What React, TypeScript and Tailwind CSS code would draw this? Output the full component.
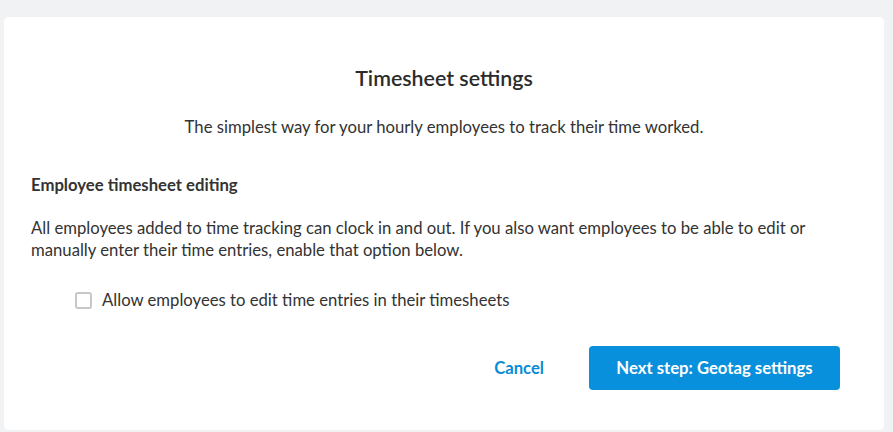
export default function App() {
  return (
    <div
      className="w-[893px] h-[432px] bg-[#f1f2f4] pt-[17px] pl-[4px] overflow-hidden"
      style={{ fontFamily: 'Lato, "Noto Sans", sans-serif' }}
    >
      <div className="w-[880px] h-[413px] bg-white rounded-[5px] flex flex-col text-[#333333] text-[16.7px] leading-[22px]">
        <h1 className="mt-[48px] text-center text-[21.4px] leading-[26px] font-semibold text-[#2b2b2b]">
          Timesheet settings
        </h1>
        <p className="mt-[25px] text-center">
          The simplest way for your hourly employees to track their time worked.
        </p>
        <div className="px-[27px]">
          <h2 className="mt-[36px] font-bold">Employee timesheet editing</h2>
          <p className="mt-[21px] max-w-[790px]">
            All employees added to time tracking can clock in and out. If you also want employees to be able to edit or
            manually enter their time entries, enable that option below.
          </p>
          <label className="mt-[28px] ml-[44px] flex items-center gap-[10px]">
            <span className="w-[17px] h-[17px] border-2 border-[#c7c7c7] rounded-[3px] bg-white" />
            Allow employees to edit time entries in their timesheets
          </label>
        </div>
        <div className="mt-[35px] mr-[44px] flex justify-end items-center gap-[45px]">
          <button className="font-bold text-[#0a8bd6]">Cancel</button>
          <button className="w-[251px] h-[44px] rounded-[4px] bg-[#0890dc] text-white font-bold">
            Next step: Geotag settings
          </button>
        </div>
      </div>
    </div>
  )
}
